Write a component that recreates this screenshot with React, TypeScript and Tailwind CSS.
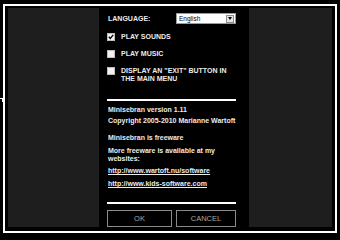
import React from 'react';

function Box({ checked }: { checked?: boolean }) {
    return (
        <div className="w-[8px] h-[8px] bg-[#f2f2f2] border border-[#bdbdbd] shrink-0 flex items-center justify-center">
            {checked && (
                <svg width="6" height="6" viewBox="0 0 6 6">
                    <path d="M0.8 2.8 L2.3 4.4 L5.2 0.9" stroke="#000" strokeWidth="1.3" fill="none" />
                </svg>
            )}
        </div>
    );
}

export default function App() {
    const font = { fontFamily: '"Liberation Sans", Arial, sans-serif' };

    return (
        <div className="relative w-[340px] h-[240px] bg-black pt-[4px] pl-[3px] overflow-hidden" style={font}>
            {/* little tick on the left edge */}
            <div className="absolute left-0 top-[98px] w-[4px] h-[1px] bg-white" />
            <div className="absolute left-[2px] top-[98px] w-[1px] h-[4px] bg-white" />

            <div className="w-[334px] h-[229px] border-2 border-white pt-[2px] pl-[3px]">
                <div className="flex h-[219px]">
                    <div className="w-[91px] bg-[#1e1e1e]" />

                    <div className="w-[150px] bg-black pl-[8px] pr-[13px] text-[7px] leading-[8px] font-bold text-[#ececec]">
                        {/* language */}
                        <div className="flex items-center justify-between mt-[5px] h-[11px]">
                            <span className="pl-[1px]">LANGUAGE:</span>
                            <div className="w-[60px] h-[11px] bg-white border border-[#9a9a9a] flex items-center justify-between pl-[2px] pr-[1px]">
                                <span className="font-normal text-black text-[6.5px]">English</span>
                                <div className="w-[8px] h-[8px] bg-[#e6e6e6] border border-[#8c8c8c] flex items-center justify-center">
                                    <svg width="4" height="3" viewBox="0 0 4 3">
                                        <path d="M0 0 H4 L2 3 Z" fill="#000" />
                                    </svg>
                                </div>
                            </div>
                        </div>

                        {/* options */}
                        <div className="flex items-start gap-[6px] mt-[9px]">
                            <Box checked />
                            <span>PLAY SOUNDS</span>
                        </div>
                        <div className="flex items-start gap-[6px] mt-[9px]">
                            <Box />
                            <span>PLAY MUSIC</span>
                        </div>
                        <div className="flex items-start gap-[6px] mt-[9px]">
                            <Box />
                            <span>DISPLAY AN "EXIT" BUTTON IN<br />THE MAIN MENU</span>
                        </div>

                        <div className="h-[2px] bg-white mt-[16px]" />

                        {/* about */}
                        <div className="pl-[1px]">
                            <p className="mt-[5px]">Minisebran version 1.11</p>
                            <p className="mt-[3px]">Copyright 2005-2010 Marianne Wartoft</p>
                            <p className="mt-[9px]">Minisebran is freeware</p>
                            <p className="mt-[5px]">More freeware is available at my<br />websites:</p>
                            <p className="mt-[4px] underline">http://www.wartoft.nu/software</p>
                            <p className="mt-[5px] underline">http://www.kids-software.com</p>
                        </div>

                        <div className="h-[2px] bg-white mt-[14px]" />

                        <div className="flex justify-between mt-[6px]">
                            <button className="w-[65px] h-[17px] border border-[#8a8a8a] font-normal text-[#a8a8a8] text-[7.5px]">OK</button>
                            <button className="w-[60px] h-[17px] border border-[#8a8a8a] font-normal text-[#a8a8a8] text-[7.5px]">CANCEL</button>
                        </div>
                    </div>

                    <div className="w-[83px] bg-[#1e1e1e]" />
                </div>
            </div>
        </div>
    );
}
